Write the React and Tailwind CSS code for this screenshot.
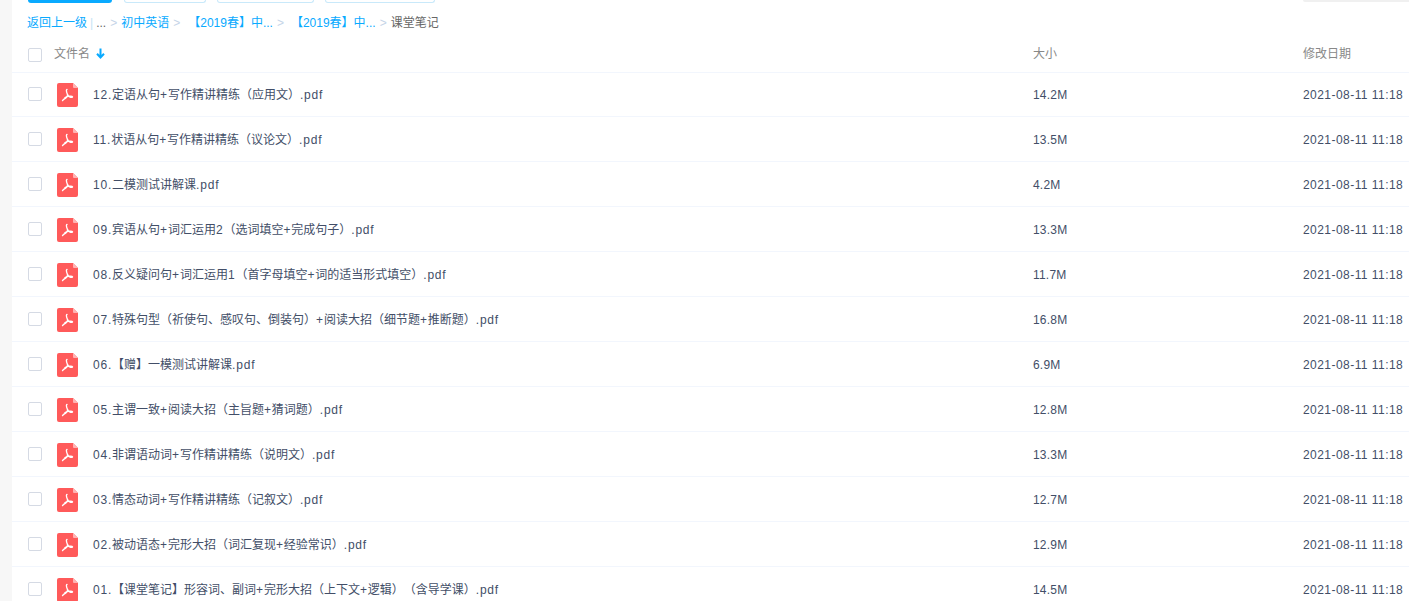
import React from "react";

const files = [
  { name: "12.定语从句+写作精讲精练（应用文）.pdf", size: "14.2M" },
  { name: "11.状语从句+写作精讲精练（议论文）.pdf", size: "13.5M" },
  { name: "10.二模测试讲解课.pdf", size: "4.2M" },
  { name: "09.宾语从句+词汇运用2（选词填空+完成句子）.pdf", size: "13.3M" },
  { name: "08.反义疑问句+词汇运用1（首字母填空+词的适当形式填空）.pdf", size: "11.7M" },
  { name: "07.特殊句型（祈使句、感叹句、倒装句）+阅读大招（细节题+推断题）.pdf", size: "16.8M" },
  { name: "06.【赠】一模测试讲解课.pdf", size: "6.9M" },
  { name: "05.主谓一致+阅读大招（主旨题+猜词题）.pdf", size: "12.8M" },
  { name: "04.非谓语动词+写作精讲精练（说明文）.pdf", size: "13.3M" },
  { name: "03.情态动词+写作精讲精练（记叙文）.pdf", size: "12.7M" },
  { name: "02.被动语态+完形大招（词汇复现+经验常识）.pdf", size: "12.9M" },
  { name: "01.【课堂笔记】形容词、副词+完形大招（上下文+逻辑）（含导学课）.pdf", size: "14.5M" },
];

function Checkbox() {
  return <span className="block w-[14px] h-[14px] shrink-0 rounded-[2px] border border-[#d5dae4] bg-white" />;
}

function PdfIcon() {
  return (
    <svg width="21" height="24" viewBox="0 0 21 24" className="shrink-0 mt-[2px]">
      <path d="M2 0H16L21 5V22a2 2 0 0 1-2 2H2a2 2 0 0 1-2-2V2a2 2 0 0 1 2-2z" fill="#ff5a5a" />
      <path d="M16 0L21 5H17a1 1 0 0 1-1-1z" fill="#ffb3b3" />
      <path
        d="M10 6.5c-.9 0-.7 2.2.3 4.6.8 2 .1 3-1.600 4-1.600.9-3 2-3.200 2.600M10.300 11.100c.7 1.700 1.900 3 3.200 3.200 1.200.2 2.200 0 2 -.6-.2-.6-1.800-.7-3.400-.5-2 .2-3.300.9-4.300 1.600"
        fill="none"
        stroke="#fff"
        strokeWidth="1.300"
        strokeLinecap="round"
      />
    </svg>
  );
}

function Sep() {
  return <span className="mx-[4px] text-[#c5d4e8]">&gt;</span>;
}

// latin runs sit a little wider than the CJK ones in the reference
function FileName({ text }) {
  const parts = text.split(/([\x00-\x7f]+)/).filter(Boolean);
  return (
    <span className="ml-[15px] mt-[2px]">
      {parts.map((p, i) =>
        /^[\x00-\x7f]/.test(p) ? (
          <span key={i} className="tracking-[0.8px]">{p}</span>
        ) : (
          <span key={i}>{p}</span>
        )
      )}
    </span>
  );
}

export default function App() {
  return (
    <div className="flex h-[601px] w-[1409px] overflow-hidden bg-white text-[12px] [text-spacing-trim:space-all] font-['Liberation_Sans','Noto_Sans_CJK_SC',sans-serif]">
      <div className="w-3 shrink-0 bg-[#f7f7f7]" />
      <div className="flex-1 min-w-0">
        <div className="flex h-[3px] pl-4">
          <div className="w-[84px] rounded-b-[3px] bg-[#09aaff]" />
          <div className="ml-3 w-[82px] rounded-b-[3px] border border-t-0 border-[#c9e9fa]" />
          <div className="ml-[11px] w-[97px] rounded-b-[3px] border border-t-0 border-[#c9e9fa]" />
          <div className="ml-[11px] w-[110px] rounded-b-[3px] border border-t-0 border-[#c9e9fa]" />
          <div className="ml-[868px] h-[2px] flex-1 rounded-bl-[3px] bg-[#f0f0f0]" />
        </div>

        <div className="flex items-center h-[38px] pt-[2px] pl-[15px] text-[#09aaff] whitespace-nowrap">
          <span>返回上一级</span>
          <span className="mx-[3px] text-[#c5e3f5]">|</span>
          <span className="text-[#666]">...</span>
          <Sep />
          <span>初中英语</span>
          <Sep />
          <span className="ml-[4px]">【2019春】中...</span>
          <Sep />
          <span className="ml-[3px]">【2019春】中...</span>
          <Sep />
          <span className="text-[#666]">课堂笔记</span>
        </div>

        <div className="flex items-center h-[32px] border-b border-[#f2f6fd] pb-[3px] pl-4 text-[#888]">
          <div className="flex items-center w-[1005px]">
            <Checkbox />
            <span className="ml-3 mb-[3px]">文件名</span>
            <svg width="9" height="11" viewBox="0 0 9 11" className="ml-[6px] mb-[3px]">
              <path d="M4.500 0.500V9.500M1 5.800L4.500 9.500L8 5.800" fill="none" stroke="#09aaff" strokeWidth="2" />
            </svg>
          </div>
          <div className="w-[270px] mb-[3px]">大小</div>
          <div className="mb-[3px]">修改日期</div>
        </div>

        <div className="-mt-px">
          {files.map((f) => (
            <div key={f.name} className="flex items-center h-[45px] border-b border-[#f2f6fd] pl-4 text-[#424e67] whitespace-nowrap">
              <div className="flex items-center w-[1005px]">
                <Checkbox />
                <span className="ml-[15px] flex"><PdfIcon /></span>
                <FileName text={f.name} />
              </div>
              <div className="w-[270px] mt-[2px] tracking-[0.2px]">{f.size}</div>
              <div className="mt-[2px] tracking-[0.45px]">2021-08-11 11:18</div>
            </div>
          ))}
        </div>
      </div>
    </div>
  );
}
